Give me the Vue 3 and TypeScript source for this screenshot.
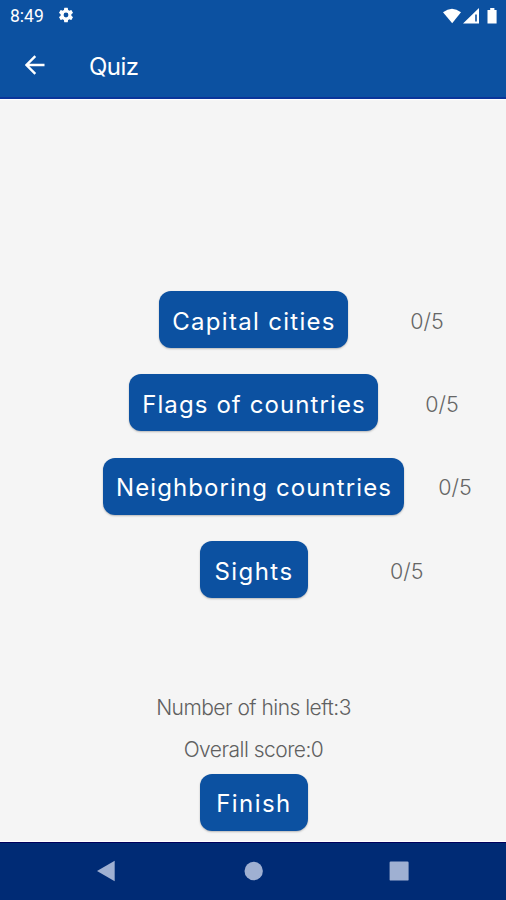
<script setup lang="ts">
interface Topic {
  id: string
  label: string
  score: string
}

const topics: Topic[] = [
  { id: 'capital', label: 'Capital cities', score: '0/5' },
  { id: 'flags', label: 'Flags of countries', score: '0/5' },
  { id: 'neighbors', label: 'Neighboring countries', score: '0/5' },
  { id: 'sights', label: 'Sights', score: '0/5' },
]
</script>

<template>
  <div class="screen">
    <header class="top">
      <div class="status">
        <span class="time">8:49</span>
        <svg class="gear" viewBox="0 0 24 24"><path fill-rule="evenodd" d="M19.14 12.94c.04-.3.06-.61.06-.94s-.02-.64-.07-.94l2.03-1.58a.49.49 0 0 0 .12-.61l-1.92-3.32a.49.49 0 0 0-.59-.22l-2.39.96a7.03 7.03 0 0 0-1.62-.94l-.36-2.54a.48.48 0 0 0-.48-.41h-3.84a.48.48 0 0 0-.47.41l-.36 2.54c-.59.24-1.13.57-1.62.94l-2.39-.96a.48.48 0 0 0-.59.22L2.74 8.87a.47.47 0 0 0 .12.61l2.03 1.58c-.05.3-.09.63-.09.94s.02.64.07.94l-2.03 1.58a.49.49 0 0 0-.12.61l1.92 3.32c.12.22.37.29.59.22l2.39-.96c.5.38 1.03.7 1.62.94l.36 2.54c.05.24.24.41.48.41h3.84c.24 0 .44-.17.47-.41l.36-2.54c.59-.24 1.13-.56 1.62-.94l2.39.96c.22.08.47 0 .59-.22l1.92-3.32a.47.47 0 0 0-.12-.61zM12 15.2a3.2 3.2 0 1 1 0-6.4 3.2 3.2 0 0 1 0 6.4z" /></svg>
        <svg class="signals" viewBox="0 0 56 18">
          <path d="M0 4.2Q9 -2.8 18 4.2L9.2 15.2Z" />
          <path fill-rule="evenodd" d="M20 15.6 36 0V15.6ZM32.2 6.6V13.6H33.8V6.6Z" />
          <path d="M45.2 1.9H47.2V0H51.4V1.9H53.6V15.6H44.5V1.9Z" />
        </svg>
      </div>
      <div class="toolbar">
        <svg class="back" viewBox="0 0 20 20"><path d="M19.5 10H2M10.3 1.2 1.5 10l8.8 8.8" /></svg>
        <h1 class="title">Quiz</h1>
      </div>
    </header>

    <main class="content">
      <section class="topics">
        <div v-for="topic in topics" :key="topic.id" class="row">
          <button type="button" class="btn" :class="topic.id">{{ topic.label }}</button>
          <span class="score">{{ topic.score }}</span>
        </div>
      </section>
      <p class="info hints">Number of hins left:3</p>
      <p class="info overall">Overall score:0</p>
      <button type="button" class="btn finish">Finish</button>
    </main>

    <nav class="navbar">
      <svg viewBox="0 0 506 58">
        <path d="M97 28 114.7 17.8V38.2Z" />
        <circle cx="253.7" cy="28" r="9.2" />
        <rect x="389.6" y="18.6" width="19" height="19" rx="1.2" />
      </svg>
    </nav>
  </div>
</template>

<style>
body {
  margin: 0;
}
</style>

<style scoped>
.screen {
  width: 506px;
  height: 900px;
  display: flex;
  flex-direction: column;
  overflow: hidden;
  background: #f5f5f5;
  font-family: Inter, "Liberation Sans", sans-serif;
}
.top {
  height: 99px;
  box-sizing: border-box;
  flex: none;
  background: #0c51a1;
  border-bottom: 2px solid #0b359a;
  box-shadow: 0 1px 1px #fff;
}
.status {
  display: flex;
  align-items: center;
  height: 32px;
  padding: 0 7px 0 10px;
  color: #fff;
}
.time {
  width: 47px;
  font: 400 17.5px/32px Roboto, sans-serif;
}
.gear {
  width: 18px;
  height: 18px;
  fill: #fff;
  margin-top: -2px;
}
.signals {
  width: 56px;
  height: 18px;
  margin: 1px 0 0 auto;
  fill: #fff;
}
.toolbar {
  display: flex;
  align-items: center;
  height: 66px;
  padding-left: 25px;
}
.back {
  width: 20px;
  height: 20px;
  fill: none;
  stroke: #fff;
  stroke-width: 2.4;
}
.title {
  margin: 4px 0 0 44px;
  font-size: 24px;
  font-weight: 400;
  line-height: 32px;
  letter-spacing: -0.5px;
  color: #fff;
}
.content {
  flex: 1;
  display: flex;
  flex-direction: column;
  align-items: center;
  padding: 192px 0 0 1px;
}
.topics {
  width: 100%;
  display: flex;
  flex-direction: column;
  gap: 26.4px;
}
.row {
  display: grid;
  grid-template-columns: 1fr auto 1fr;
  align-items: center;
}
.btn {
  grid-column: 2;
  height: 57px;
  padding: 4px 0 0 1px;
  border: 0;
  border-radius: 12px;
  background: #0c51a1;
  box-shadow: 0 1px 2px rgba(0, 0, 0, 0.25);
  color: #fff;
  font: 400 24px/32px Inter, "Liberation Sans", sans-serif;
  letter-spacing: 1.1px;
  white-space: nowrap;
}
.capital {
  width: 189px;
  letter-spacing: 1.3px;
}
.flags {
  width: 249px;
}
.neighbors {
  width: 301px;
}
.sights,
.finish {
  width: 108px;
  letter-spacing: 1.45px;
}
.score {
  justify-self: center;
  padding-top: 2px;
  font-size: 21.5px;
  font-weight: 300;
  line-height: 28px;
  color: #666;
}
.info {
  margin: 0;
  font-size: 21px;
  font-weight: 300;
  line-height: 28px;
  letter-spacing: -0.52px;
  color: #606060;
}
.hints {
  margin-top: 96.3px;
}
.overall {
  margin: 13.5px 0 10px;
}
.navbar {
  height: 58px;
  flex: none;
  background: #002b75;
  border-top: 1px solid #00005c;
  box-sizing: border-box;
  box-shadow: 0 -1px 1px #fff;
}
.navbar svg {
  display: block;
  width: 506px;
  height: 58px;
  fill: #9fb0d2;
}
</style>
